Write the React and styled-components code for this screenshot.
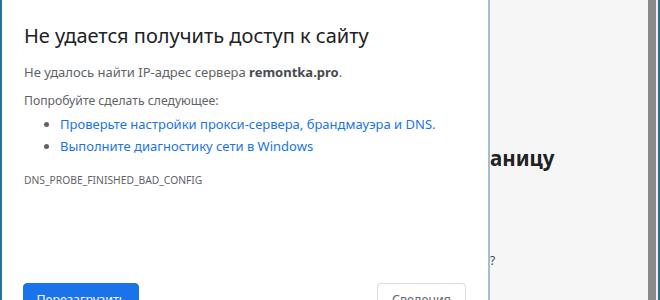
import React from "react";
import styled, { createGlobalStyle } from "styled-components";

const Global = createGlobalStyle`
  html, body { margin: 0; padding: 0; background: #ffffff; }
  body { font-family: "Noto Sans", "Open Sans", sans-serif; }
  *, *::before, *::after { box-sizing: border-box; }
`;

const Screen = styled.div`
  display: flex;
  width: 660px;
  height: 300px;
  overflow: hidden;
`;

const Stripe = styled.div`
  flex: 0 0 ${(p) => p.$w}px;
  background: ${(p) => p.$c};
`;

const Dialog = styled.div`
  flex: 0 0 488px;
  background: #ffffff;
  border-right: 2px solid #a3bdd3;
  padding: 0 22px 0 21px;
  display: flex;
  flex-direction: column;
  overflow: hidden;
`;

const Title = styled.h1`
  margin: 24px 0 0 1px;
  font-size: 20px;
  line-height: 24px;
  font-weight: 400;
  color: #202124;
  letter-spacing: 0;
  white-space: nowrap;
`;

const Para = styled.p`
  margin: ${(p) => p.$mt}px 0 0 1px;
  font-size: ${(p) => p.$fs}px;
  line-height: 16px;
  color: #5f6368;
  white-space: nowrap;
`;

const Strong = styled.b`
  font-weight: 700;
  color: #474b50;
`;

const List = styled.ul`
  margin: 4px 0 0 0;
  padding: 0 0 0 37px;
  list-style: disc;
  color: #5f6368;
`;

const Item = styled.li`
  font-size: 13px;
  line-height: 22px;
  color: #5f6368;
  white-space: nowrap;
`;

const Link = styled.a`
  color: #1a73e8;
  text-decoration: none;
`;

const Code = styled.div`
  margin: 16px 0 0 1px;
  font-size: 10.3px;
  line-height: 14px;
  color: #5f6368;
`;

const Buttons = styled.div`
  display: flex;
  justify-content: space-between;
  margin-top: 96px;
`;

const Button = styled.button`
  flex: 0 0 auto;
  width: ${(p) => p.$w}px;
  height: 34px;
  border-radius: 4px;
  font-family: "Noto Sans", "Open Sans", sans-serif;
  font-size: 12.5px;
  padding: 0;
  text-align: center;
  line-height: 32px;
  cursor: pointer;
  background: ${(p) => (p.$primary ? "#1a73e8" : "#ffffff")};
  color: ${(p) => (p.$primary ? "#ffffff" : "#5f6368")};
  border: 1px solid ${(p) => (p.$primary ? "#1a73e8" : "#dadce0")};
`;

const Backdrop = styled.div`
  flex: 1 1 auto;
  background: #f6f6f6;
  display: flex;
  flex-direction: column;
  overflow: hidden;
  padding-top: 144px;
`;

const BackHeading = styled.div`
  font-size: 20.5px;
  line-height: 28px;
  font-weight: 700;
  color: #202124;
  white-space: nowrap;
`;

const BackText = styled.div`
  margin-top: 81px;
  font-size: 12px;
  line-height: 16px;
  color: #3c4a5c;
`;

const Scrollbar = styled.div`
  flex: 0 0 8px;
  background: #8a8a8a;
`;

export default function App() {
  return (
    <>
      <Global />
      <Screen>
        <Stripe $w={2} $c="#2c6e98" />
        <Dialog>
          <Title>Не удается получить доступ к сайту</Title>
          <Para $mt={16} $fs={13}>
            Не удалось найти IP-адрес сервера <Strong>remontka.pro</Strong>.
          </Para>
          <Para $mt={13} $fs={12.2}>Попробуйте сделать следующее:</Para>
          <List>
            <Item>
              <Link>Проверьте настройки прокси-сервера, брандмауэра и DNS.</Link>
            </Item>
            <Item>
              <Link>Выполните диагностику сети в Windows</Link>
            </Item>
          </List>
          <Code>DNS_PROBE_FINISHED_BAD_CONFIG</Code>
          <Buttons>
            <Button $primary $w={116}>Перезагрузить</Button>
            <Button $w={89}>Сведения</Button>
          </Buttons>
        </Dialog>
        <Backdrop>
          <BackHeading>аницу</BackHeading>
          <BackText>?</BackText>
        </Backdrop>
        <Scrollbar />
        <Stripe $w={2} $c="#f0f0f0" />
        <Stripe $w={2} $c="#2c6e98" />
      </Screen>
    </>
  );
}
